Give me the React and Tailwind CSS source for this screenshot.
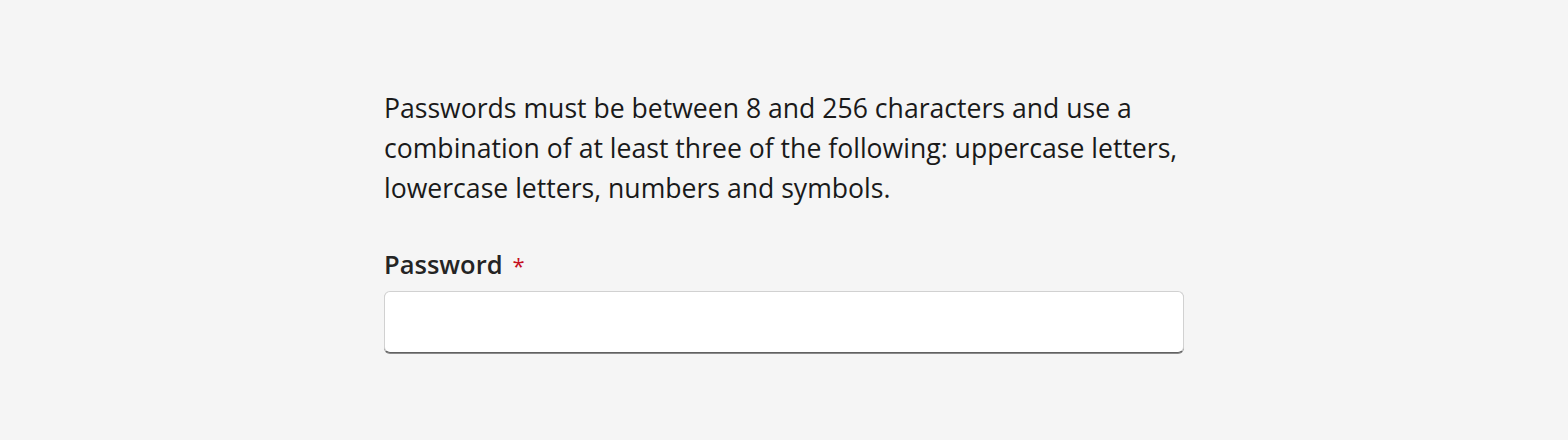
export default function App() {
  return (
    <div className="min-h-[440px] w-full bg-[#f5f5f5] text-[#1a1a1a]" style={{ fontFamily: '"Open Sans", "Noto Sans", sans-serif' }}>
      <div className="mx-auto w-[800px] pt-[88px]">
        <p className="whitespace-nowrap text-[26.6px] leading-[40px]">
          Passwords must be between 8 and 256 characters and use a<br />
          combination of at least three of the following: uppercase letters,<br />
          lowercase letters, numbers and symbols.
        </p>
        <label className="mt-[41px] mb-[10px] block text-[25.5px] font-semibold leading-[31px] text-[#242424]">
          Password<span className="pl-[10px] text-[22px] font-normal text-[#c50f1f]">*</span>
        </label>
        <input
          type="password"
          className="block h-[62px] w-[800px] rounded-[6px] border border-[#d1d1d1] border-b-[#616161] bg-white px-3 shadow-[0_1px_0_#8a8a8a] outline-none"
        />
      </div>
    </div>
  );
}
